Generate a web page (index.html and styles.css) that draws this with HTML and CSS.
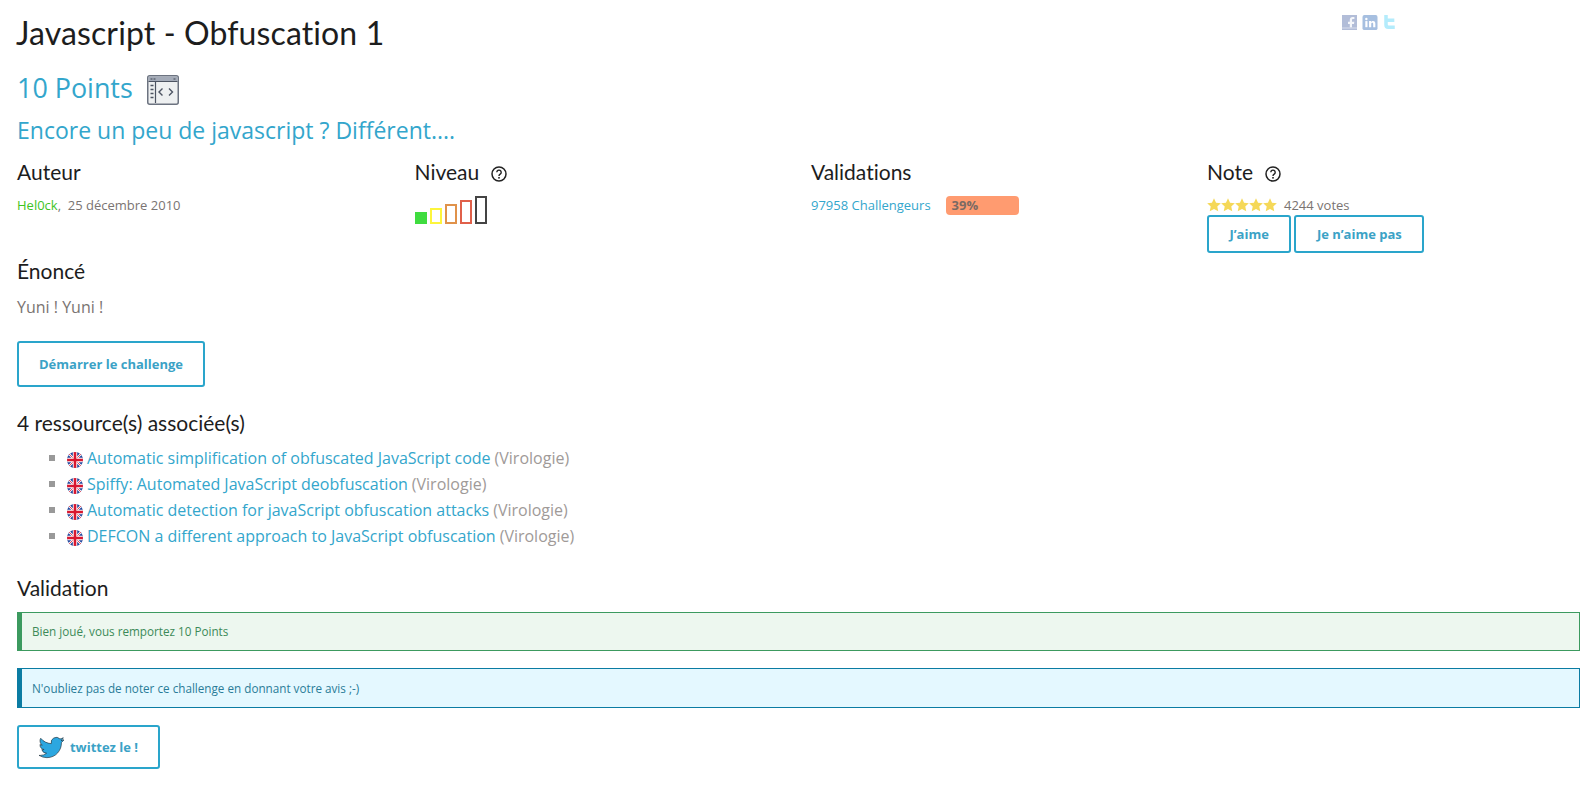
FILE: index.html
```html
<!DOCTYPE html>
<html lang="fr">
<head>
<meta charset="utf-8">
<title>Javascript - Obfuscation 1</title>
<link rel="stylesheet" href="styles.css">
</head>
<body>
<svg class="defs" width="0" height="0" aria-hidden="true">
  <symbol id="uk" viewBox="0 0 16 16">
    <clipPath id="uk-clip"><circle cx="8" cy="8" r="8"/></clipPath>
    <g clip-path="url(#uk-clip)">
      <rect width="16" height="16" fill="#24479c"/>
      <path d="M0 0L16 16M16 0L0 16" stroke="#fff" stroke-width="2.200"/>
      <path d="M0 0L16 16M16 0L0 16" stroke="#d8172f" stroke-width=".8"/>
      <path d="M8 0V16M0 8H16" stroke="#fff" stroke-width="4.400"/>
      <path d="M8 0V16M0 8H16" stroke="#d8172f" stroke-width="2.600"/>
    </g>
  </symbol>
  <symbol id="help" viewBox="0 0 16 16">
    <circle cx="8" cy="8" r="7" fill="none" stroke="#222" stroke-width="1.500"/>
    <path d="M5.800 6.300a2.200 2.200 0 1 1 3.400 1.900c-.8.500-1.200.9-1.200 1.800" fill="none" stroke="#222" stroke-width="1.400"/>
    <rect x="7.200" y="11" width="1.600" height="1.600" fill="#222"/>
  </symbol>
  <symbol id="star" viewBox="0 0 24 24">
    <path d="M12 .5l3.500 7.500 8.200 1-6.100 5.600 1.700 8.200L12 18.700l-7.300 4.100 1.700-8.200L.3 9l8.200-1z" fill="#f5d858"/>
  </symbol>
</svg>

<header class="head">
  <h1 class="title">Javascript - Obfuscation 1</h1>
  <div class="social">
    <svg class="soc soc-f" viewBox="0 0 15 15"><rect width="15" height="15" fill="#b2bdd8"/><path d="M10 12.500V9h2l.3-2.300H10V5.200c0-.7.2-1.100 1.200-1.100h1.200V2.100C12 2 11.400 2 10.600 2 8.900 2 7.800 3 7.800 4.900v1.800H6V9h1.800v3.500z" fill="#f4f6fa"/><rect y="12.500" width="15" height="1" fill="#d8deec"/></svg>
    <svg class="soc soc-in" viewBox="0 0 16 16"><rect width="16" height="16" rx="2" fill="#a6bfe0"/><rect x="3" y="6.500" width="2.300" height="6.500" fill="#fff"/><circle cx="4.100" cy="4.300" r="1.300" fill="#fff"/><path d="M7 6.500h2.200v1c.4-.7 1.100-1.200 2.100-1.200 1.700 0 2.400 1.100 2.400 2.900V13h-2.300V9.600c0-.9-.3-1.400-1-1.400-.8 0-1.100.6-1.100 1.400V13H7z" fill="#fff"/></svg>
    <svg class="soc soc-t" viewBox="0 0 14 16"><path d="M1 0h4v4h7.500v4H5v2.500c0 1 .5 1.500 1.500 1.500H13v4H5.500C2.500 16 1 14.500 1 11.500z" fill="#b4ecfc"/></svg>
  </div>
</header>

<h2 class="points">10 Points
  <svg class="cat" viewBox="0 0 32 30">
    <rect x=".75" y=".75" width="30.500" height="28.500" rx="2" fill="#eef0f1" stroke="#6c7380" stroke-width="1.500"/>
    <rect x="1.500" y="1.500" width="29" height="5" fill="#a4abb8"/>
    <path d="M1.500 6.500h29" stroke="#4d5462" stroke-width="1"/>
    <path d="M3.500 4h2M6.500 4h2M26.500 4h2" stroke="#3d4450" stroke-width="1"/>
    <path d="M8.500 7v21" stroke="#4d5462" stroke-width="1.200"/>
    <path d="M3.500 10.500h3M3.500 14.500h3M3.500 18.500h3M3.500 22.500h3" stroke="#4d5462" stroke-width="1.400"/>
    <path d="M15.500 13.500l-3.500 3.500 3.500 3.500M22 13.500l3.500 3.500-3.500 3.500" fill="none" stroke="#4d5462" stroke-width="1.400"/>
  </svg>
</h2>
<h2 class="subtitle">Encore un peu de javascript ? Différent....</h2>

<section class="meta">
  <div class="meta-col">
    <h3 class="meta-title">Auteur</h3>
    <p class="small"><a class="author" href="#">Hel0ck</a><span class="gray">,&nbsp; 25 décembre 2010</span></p>
  </div>
  <div class="meta-col">
    <h3 class="meta-title">Niveau <svg class="help"><use href="#help"/></svg></h3>
    <div class="bars">
      <span class="bar b1"></span><span class="bar b2"></span><span class="bar b3"></span><span class="bar b4"></span><span class="bar b5"></span>
    </div>
  </div>
  <div class="meta-col">
    <h3 class="meta-title">Validations</h3>
    <p class="small valid"><a class="link" href="#">97958 Challengeurs</a><span class="pct"><b>39%</b></span></p>
  </div>
  <div class="meta-col">
    <h3 class="meta-title">Note <svg class="help"><use href="#help"/></svg></h3>
    <p class="small votes"><span class="stars"><svg class="star"><use href="#star"/></svg><svg class="star"><use href="#star"/></svg><svg class="star"><use href="#star"/></svg><svg class="star"><use href="#star"/></svg><svg class="star"><use href="#star"/></svg></span><span class="gray">4244 votes</span></p>
    <div class="vote-btns"><a class="btn btn-sm" href="#">J’aime</a><a class="btn btn-sm" href="#">Je n’aime pas</a></div>
  </div>
</section>

<h3 class="section-title enonce">Énoncé</h3>
<p class="body-text">Yuni ! Yuni !</p>
<a class="btn btn-start" href="#">Démarrer le challenge</a>

<h3 class="section-title res">4 ressource(s) associée(s)</h3>
<ul class="resources">
  <li><svg class="flag"><use href="#uk"/></svg><a href="#">Automatic simplification of obfuscated JavaScript code</a><span class="cat-name">(Virologie)</span></li>
  <li><svg class="flag"><use href="#uk"/></svg><a href="#">Spiffy: Automated JavaScript deobfuscation</a><span class="cat-name">(Virologie)</span></li>
  <li><svg class="flag"><use href="#uk"/></svg><a href="#">Automatic detection for javaScript obfuscation attacks</a><span class="cat-name">(Virologie)</span></li>
  <li><svg class="flag"><use href="#uk"/></svg><a href="#">DEFCON a different approach to JavaScript obfuscation</a><span class="cat-name">(Virologie)</span></li>
</ul>

<h3 class="section-title val">Validation</h3>
<div class="alert success">Bien joué, vous remportez 10 Points</div>
<div class="alert info">N'oubliez pas de noter ce challenge en donnant votre avis ;-)</div>
<a class="btn btn-tw" href="#">
  <svg class="bird" viewBox="0 0 24 24"><path d="M23.953 4.570a10 10 0 01-2.825.775 4.958 4.958 0 002.163-2.723c-.951.555-2.005.959-3.127 1.184a4.920 4.920 0 00-8.384 4.482C7.690 8.095 4.067 6.130 1.640 3.162a4.822 4.822 0 00-.666 2.475c0 1.710.870 3.213 2.188 4.096a4.904 4.904 0 01-2.228-.616v.060a4.923 4.923 0 003.946 4.827 4.996 4.996 0 01-2.212.085 4.936 4.936 0 004.604 3.417 9.867 9.867 0 01-6.102 2.105c-.390 0-.779-.023-1.170-.067a13.995 13.995 0 007.557 2.209c9.053 0 13.998-7.496 13.998-13.985 0-.210 0-.420-.015-.630A9.935 9.935 0 0024 4.590z" fill="#2ca7e0" stroke="#1b2a33" stroke-width=".6"/></svg>
  twittez le !
</a>
</body>
</html>
```
FILE: styles.css
```css
* { box-sizing: border-box; }
html, body { margin: 0; padding: 0; }
body {
  padding: 0 14px 0 17px;
  background: #fff;
  color: #7a7472;
  font-family: "Open Sans", "Noto Sans", sans-serif;
  font-size: 16px;
  height: 805px;
  overflow: hidden;
  font-variant-ligatures: none;
}
a { color: #33a6cc; text-decoration: none; }
.defs { position: absolute; }

.head { display: flex; height: 60px; justify-content: space-between; }
.title {
  margin: 11px 0 0 -1px;
  font: 400 32px/44px Lato, sans-serif;
  letter-spacing: .12px;
  color: #1d1d1d;
  font-variant-ligatures: none;
}
.social { display: flex; gap: 5px; margin: 15px 184px 0 0; height: 16px; align-items: flex-start; }
.soc { display: block; height: 15px; }
.soc-f { width: 15px; }
.soc-in { width: 16px; }
.soc-t { width: 13px; height: 14px; }

.points {
  display: flex; align-items: center; gap: 14px;
  margin: 12px 0 0;
  height: 32px;
  font: 400 26.900px/32px "Open Sans", sans-serif;
  color: #33a6cc;
}
.cat { width: 32px; height: 30px; margin-top: 4px; }
.subtitle {
  margin: 11px 0 0;
  font: 400 23px/30px "Open Sans", sans-serif;
  color: #33a6cc;
}

.meta {
  display: grid;
  grid-template-columns: 397.500px 396.500px 396px 1fr;
  margin-top: 14px;
  height: 95px;
}
.meta-title {
  display: flex; align-items: center; gap: 12px;
  margin: 0;
  height: 26px;
  font: 400 21px/26px Lato, sans-serif;
  color: #1d1d1d;
  font-variant-ligatures: none;
}
.help { width: 16px; height: 16px; margin-top: 3px; }
.small { margin: 11px 0 0; font-size: 13px; line-height: 18px; }
.gray { color: #7a7472; }
.author { color: #3ec41f; }
.link { color: #33a6cc; }

.bars { display: flex; align-items: flex-end; gap: 3px; height: 28px; margin-top: 11px; }
.bar { display: block; width: 12px; border: 2px solid; }
.b1 { height: 12px; background: #3fdc3f; border-color: #3fdc3f; }
.b2 { height: 16px; border-color: #fdf53c; }
.b3 { height: 20px; border-color: #e0924a; }
.b4 { height: 24px; border-color: #e0604a; }
.b5 { height: 28px; border-color: #444; }

.valid { display: flex; align-items: flex-start; gap: 15px; }
.pct {
  display: block; width: 73px; height: 19px; padding-left: 6px;
  background: #ff9b70; border-radius: 4px;
  font-size: 13px; line-height: 19px; color: #7a6a64;
}
.votes { display: flex; align-items: center; gap: 7px; height: 18px; }
.stars { display: flex; }
.star { width: 14px; height: 14px; }
.vote-btns { display: flex; gap: 3px; margin-top: 1px; }

.btn {
  display: inline-flex; align-items: center; justify-content: center;
  border: 2px solid #2aa5cb; border-radius: 3px;
  font-weight: 700; font-size: 13px; color: #3ba2c6; background: #fff;
}
.btn-sm { height: 38px; padding: 0 20.500px; }
.btn-start { width: 188px; height: 46px; margin-top: 22px; }
.btn-tw { width: 143px; height: 44px; gap: 6px; }

.section-title {
  margin: 0;
  font: 400 21px/28px Lato, sans-serif;
  color: #1d1d1d;
  font-variant-ligatures: none;
}
.enonce { margin-top: 3px; }
.body-text { margin: 10px 0 0; line-height: 24px; }
.res { margin-top: 22px; }
.resources { list-style: none; margin: 8.300px 0 0; padding: 0 0 0 32px; }
.resources li { display: flex; align-items: center; height: 25.800px; white-space: pre; }
.resources li::before {
  content: ""; width: 6px; height: 6px; background: #999; margin-right: 12px;
}
.flag { width: 16px; height: 16px; margin-right: 4px; margin-top: 4px; }
.cat-name { color: #a09a98; margin-left: 4px; }
.val { margin-top: 25.700px; }

.alert {
  height: 39px;
  padding-left: 10px;
  font-size: 11.700px;
  border: 1px solid;
  border-left-width: 5px;
}
.success { margin-top: 10px; line-height: 36px; background: #edf7ef; border-color: #3c9a5f; color: #3c8a58; }
.info { margin-top: 17px; height: 40px; line-height: 38px; background: #e4f8ff; border-color: #0b7ca3; color: #2a7c98; }
.btn-tw { margin-top: 17px; }
.bird { width: 25px; height: 25px; }
```
